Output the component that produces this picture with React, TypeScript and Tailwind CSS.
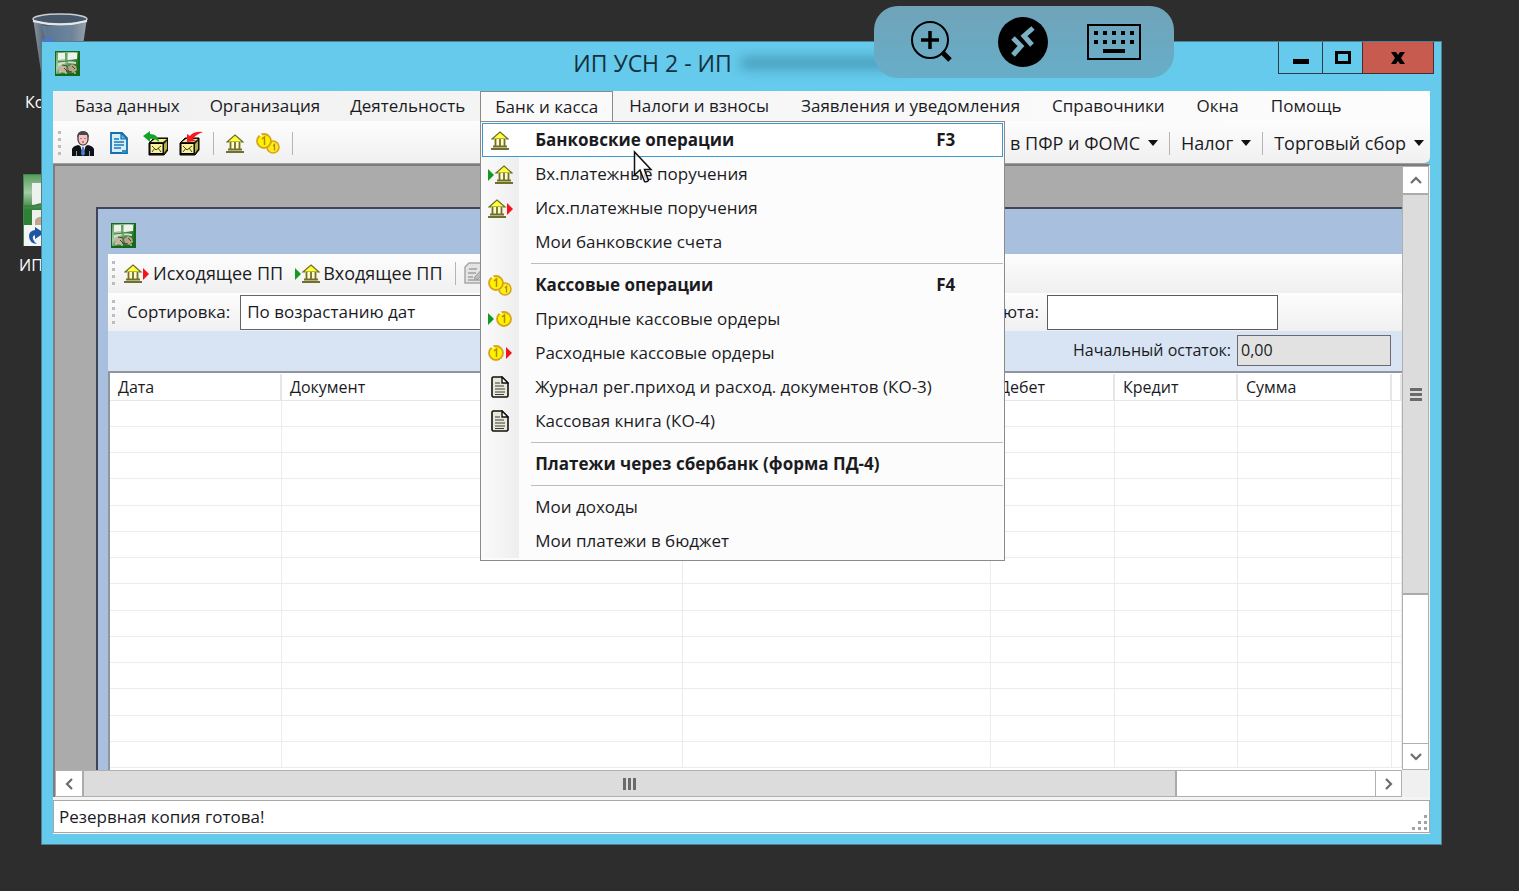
import React from "react";

type IconProps = { className?: string };

const AppIcon: React.FC<IconProps> = ({ className = "size-[25px]" }) => (
  <svg viewBox="0 0 25 25" className={className} aria-hidden="true">
    <defs>
      <linearGradient id="leaf" x1="0" y1="0" x2="1" y2="1">
        <stop offset="0" stopColor="#5c9a5c" />
        <stop offset="0.4" stopColor="#a9cfa6" />
        <stop offset="0.65" stopColor="#2f7d33" />
        <stop offset="1" stopColor="#0c6414" />
      </linearGradient>
    </defs>
    <rect width="25" height="25" fill="#14691b" />
    <rect x="1" y="1" width="22" height="22" fill="url(#leaf)" />
    <path d="M3 2h7v6l-7 1zM13 2h9v6l-9 1z" fill="#eef2eb" />
    <path d="M3 12l6-2 2 2-8 3zM13 10l8 1v2l-8-1z" fill="#cfdfc9" />
    <path d="M4 17l3-3 5 1 1 4-3 3-5-1z" fill="#c6b49c" />
    <path d="M13 16l4-3 4 2 1 4-4 3-4-1z" fill="#b9a285" />
    <path d="M7 14l5 1M13 20l4 1M9 17l3 3M17 15l3 3M12 15v6" stroke="#3d4b35" fill="none" />
    <path d="M11 2v8M3 11l19-2" stroke="#3c7f3f" fill="none" />
    <path d="M4 21h2M10 22h2M19 22h2" stroke="#e8efe4" />
  </svg>
);

const BankShape = () => (
  <>
    <path d="M9 1l8 7H1z" fill="#ffff3c" stroke="#70702a" strokeWidth="1.2" />
    <rect x="3" y="8" width="12" height="7" fill="#fffbd0" />
    <path d="M4.500 8v7M9 8v7M13.500 8v7" stroke="#70702a" strokeWidth="1.800" />
    <path d="M2 15.500h14M0 18h18" stroke="#70702a" strokeWidth="2" />
  </>
);

const BankIcon = () => (
  <svg viewBox="0 0 18 19" className="h-[19px] w-[18px]" aria-hidden="true">
    <BankShape />
  </svg>
);

const BankInIcon = () => (
  <svg viewBox="0 0 25 19" className="h-[19px] w-[25px]" aria-hidden="true">
    <path d="M0 4l6 6-6 6z" fill="#129a1e" />
    <g transform="translate(7 0)">
      <BankShape />
    </g>
  </svg>
);

const BankOutIcon = () => (
  <svg viewBox="0 0 25 19" className="h-[19px] w-[25px]" aria-hidden="true">
    <BankShape />
    <path d="M19 4l6 6-6 6z" fill="#f5121b" />
  </svg>
);

const CoinShape = () => (
  <>
    <circle cx="8" cy="8" r="7" fill="#fff200" stroke="#d6a419" strokeWidth="1.800" />
    <path d="M3 1l3 2" stroke="#fff" strokeWidth="2" />
    <path d="M6 6l2.500-2v8" fill="none" stroke="#b08a10" strokeWidth="1.500" />
  </>
);

const CoinsIcon = () => (
  <svg viewBox="0 0 24 21" className="h-[21px] w-[24px]" aria-hidden="true">
    <circle cx="17" cy="14" r="6" fill="#ffec1a" stroke="#d6a419" strokeWidth="1.600" />
    <path d="M17 13l1.500-1.500v6" fill="none" stroke="#b08a10" strokeWidth="1.300" />
    <CoinShape />
  </svg>
);

const CoinInIcon = () => (
  <svg viewBox="0 0 24 17" className="h-[17px] w-[24px]" aria-hidden="true">
    <path d="M0 2l6 6-6 6z" fill="#129a1e" />
    <g transform="translate(8 0)">
      <CoinShape />
    </g>
  </svg>
);

const CoinOutIcon = () => (
  <svg viewBox="0 0 24 17" className="h-[17px] w-[24px]" aria-hidden="true">
    <CoinShape />
    <path d="M18 2l6 6-6 6z" fill="#f5121b" />
  </svg>
);

const PaperIcon = () => (
  <svg viewBox="0 0 18 22" className="h-[22px] w-[18px]" aria-hidden="true">
    <path d="M1 2l1-1h9l6 6v13l-1 1H2l-1-1z" fill="#e9e9d9" stroke="#111" strokeWidth="1.600" />
    <path d="M11 1v6h6z" fill="#fff" stroke="#111" strokeWidth="1.400" />
    <path d="M4 7h5M4 10h9M4 13h10M4 16h10M4 18.500h9" stroke="#3a3a3a" strokeWidth="1.200" />
  </svg>
);

const PersonIcon = () => (
  <svg viewBox="0 0 22 25" className="h-[25px] w-[22px]" aria-hidden="true">
    <path d="M6 6q0-5 5-5t5 5v3q-1 5-5 5t-5-5z" fill="#f6c3c3" stroke="#3a3030" strokeWidth="1.200" />
    <path d="M5 7q0-7 6-7t6 7l-2-3H7z" fill="#4a4547" />
    <path d="M9 7v1M13 7v1M10 11h2" stroke="#7d3b3b" />
    <path d="M0 25v-7q1-3 6-4l5 2 5-2q5 1 6 4v7z" fill="#0e1116" />
    <path d="M8 14l3 9 3-9-3 2z" fill="#fff" />
    <path d="M10 16h2l1 7-2 2-2-2z" fill="#4d7fd0" />
    <path d="M4.500 20v5M17.500 20v5" stroke="#999" />
  </svg>
);

const BlueDocIcon = () => (
  <svg viewBox="0 0 18 22" className="h-[22px] w-[18px]" aria-hidden="true">
    <path d="M1 1h11l5 5v15H1z" fill="#d5eefb" stroke="#146fae" strokeWidth="1.800" />
    <path d="M11 1v6h6z" fill="#5fb4e2" stroke="#146fae" strokeWidth="1.200" />
    <path d="M4 7h5M4 10h10M4 13h10M4 16h7" stroke="#1878b8" strokeWidth="1.500" />
    <path d="M12 18h4v3h-4z" fill="#2b91cb" />
  </svg>
);

const BoxShape = () => (
  <>
    <path d="M4 12l5-5h14v12l-4 5H4z" fill="#222112" stroke="#000" />
    <path d="M6 11l4-3h12l-4 3z" fill="#f3ee86" />
    <path d="M19 13l3-3v8l-3 4z" fill="#b5ad48" />
    <rect x="5" y="12.500" width="13" height="10" fill="#f6f19a" stroke="#000" />
    <path d="M7 15l4 4 5-4M7 21l3-4M16 21l-3-4" fill="none" stroke="#4a4721" />
  </>
);

const BoxOutIcon = () => (
  <svg viewBox="0 0 25 25" className="size-[25px]" aria-hidden="true">
    <g transform="translate(2 0)">
      <BoxShape />
    </g>
    <path d="M0 5l7-5v3q8 0 9 8-4-4-9-3v3z" fill="#17a32a" />
  </svg>
);

const BoxInIcon = () => (
  <svg viewBox="0 0 25 25" className="size-[25px]" aria-hidden="true">
    <g transform="translate(-3 0)">
      <BoxShape />
    </g>
    <path d="M24 1q-9-1-13 4l-3-2v8l9-1-3-2q2-4 10-7z" fill="#fb1520" />
  </svg>
);

const EditDisabledIcon = () => (
  <svg viewBox="0 0 24 24" className="size-6" aria-hidden="true">
    <path d="M2 6l4-4h14v20H2z" fill="#e4e4e4" stroke="#a8a8a8" strokeWidth="1.500" />
    <path d="M6 8h8M5 12h8M5 16h5M5 19h12" stroke="#a0a0a0" strokeWidth="1.500" />
    <path d="M11 17l10-11 3 3-10 10z" fill="#bcbcbc" stroke="#989898" />
  </svg>
);

const RecycleBin = () => (
  <svg viewBox="0 0 56 64" className="h-16 w-14" aria-hidden="true">
    <defs>
      <linearGradient id="glass" x1="0" y1="0" x2="1" y2="0">
        <stop offset="0" stopColor="#8a96a3" />
        <stop offset="0.25" stopColor="#4c5d6e" />
        <stop offset="0.7" stopColor="#6c8096" />
        <stop offset="1" stopColor="#97a2ad" />
      </linearGradient>
    </defs>
    <path d="M1 6l8 54h38l8-54z" fill="url(#glass)" />
    <path d="M10 14h30l-2 16H14z" fill="#6d88a6" opacity="0.6" />
    <path d="M10 28l6-3 6 2-2 4H11z" fill="#4f74d6" />
    <ellipse cx="28" cy="7" rx="27" ry="5" fill="#46576a" stroke="#c9ced3" strokeWidth="1.500" />
    <path d="M1 9q27 7 54 0" fill="none" stroke="#e4e7ea" strokeWidth="2" />
  </svg>
);

const Shortcut = () => (
  <svg viewBox="0 0 72 72" className="size-[72px]" aria-hidden="true">
    <defs>
      <linearGradient id="tile" x1="0" y1="0" x2="0" y2="1">
        <stop offset="0" stopColor="#5a9d60" />
        <stop offset="0.35" stopColor="#a4cba5" />
        <stop offset="0.7" stopColor="#2f8137" />
      </linearGradient>
    </defs>
    <rect width="72" height="72" fill="#3d8845" />
    <rect x="1" y="1" width="17" height="50" fill="url(#tile)" />
    <path d="M9 9h24v22H9zM9 36h24v18H9z" fill="#eef2ec" />
    <path d="M0 32q9 1 18-2" stroke="#3b8540" strokeWidth="2" fill="none" />
    <path d="M12 46q3-4 8-3v10h-8z" fill="#c4a48d" />
    <rect x="1" y="51" width="21" height="21" fill="#f2f4f6" />
    <path d="M14 70q-8-1-8-8 0-5 6-6v-3l9 6-9 6v-4q-3 1-2 4 1 3 4 5z" fill="#1c56a4" />
  </svg>
);

const Cursor = () => (
  <svg viewBox="0 0 20 34" className="h-[34px] w-5" aria-hidden="true">
    <path
      d="M1.500 2v23l5.500-5 4.500 11.500q2 1 4-1L11.500 19.500H18z"
      fill="#fff"
      fillOpacity="0.75"
      stroke="#111"
      strokeWidth="1.500"
    />
  </svg>
);

const Caret = () => (
  <svg viewBox="0 0 10 6" className="h-1.5 w-2.5" aria-hidden="true">
    <path d="M0 0h10L5 6z" fill="#111" />
  </svg>
);

const Chevron: React.FC<{ d: string }> = ({ d }) => (
  <svg viewBox="0 0 12 12" className="size-3" aria-hidden="true">
    <path d={d} fill="none" stroke="#6b6b6b" strokeWidth="2.200" />
  </svg>
);

const Grip = () => (
  <div className="flex flex-col gap-1 px-1" aria-hidden="true">
    <i className="size-[3px] bg-[#bdbdbd]" />
    <i className="size-[3px] bg-[#bdbdbd]" />
    <i className="size-[3px] bg-[#bdbdbd]" />
    <i className="size-[3px] bg-[#bdbdbd]" />
  </div>
);

const Divider = () => <div className="h-[23px] w-px shrink-0 bg-[#b5b5b5]" />;

const menuBefore = ["База данных", "Организация", "Деятельность"];
const menuAfter = [
  "Налоги и взносы",
  "Заявления и уведомления",
  "Справочники",
  "Окна",
  "Помощь",
];

type Entry = { label: string; icon?: React.ReactNode; hotkey?: string; bold?: boolean };

const bankMenu: Entry[][] = [
  [
    { label: "Банковские операции", icon: <BankIcon />, hotkey: "F3", bold: true },
    { label: "Вх.платежные поручения", icon: <BankInIcon /> },
    { label: "Исх.платежные поручения", icon: <BankOutIcon /> },
    { label: "Мои банковские счета" },
  ],
  [
    { label: "Кассовые операции", icon: <CoinsIcon />, hotkey: "F4", bold: true },
    { label: "Приходные кассовые ордеры", icon: <CoinInIcon /> },
    { label: "Расходные кассовые ордеры", icon: <CoinOutIcon /> },
    { label: "Журнал рег.приход и расход. документов (КО-3)", icon: <PaperIcon /> },
    { label: "Кассовая книга (КО-4)", icon: <PaperIcon /> },
  ],
  [{ label: "Платежи через сбербанк (форма ПД-4)", bold: true }],
  [{ label: "Мои доходы" }, { label: "Мои платежи в бюджет" }],
];

const toolbarButtons = [
  { name: "Предприниматель", icon: <PersonIcon /> },
  { name: "Документ", icon: <BlueDocIcon /> },
  { name: "Сохранить копию", icon: <BoxOutIcon /> },
  { name: "Восстановить копию", icon: <BoxInIcon /> },
];

const columns = [
  { name: "Дата", width: "w-[171px]" },
  { name: "Документ", width: "w-[401px]" },
  { name: "", width: "w-[308px]" },
  { name: "Дебет", width: "w-[124px]" },
  { name: "Кредит", width: "w-[123px]" },
  { name: "Сумма", width: "w-[154px]" },
  { name: "", width: "w-auto" },
];

const rows = Array.from({ length: 14 }, (_, i) => i);

const BankMenu = () => (
  <div
    role="menu"
    className="absolute top-full left-[-1px] z-20 w-[525px] border border-[#8a8a8a] bg-[#fcfcfc] p-px pb-0.5"
  >
    <div className="bg-linear-to-r from-[#fafafa] from-0% to-[#eeeeee] to-100% bg-[length:37px_100%] bg-no-repeat">
      {bankMenu.map((group, g) => (
        <div
          key={g}
          className={g > 0 ? "before:my-1 before:ml-[49px] before:block before:h-px before:bg-[#bdbdbd]" : ""}
        >
          {group.map((entry, i) => (
            <button
              key={entry.label}
              role="menuitem"
              className={`flex h-[34px] w-full items-center border pr-[47px] text-left text-[17px] ${
                g === 0 && i === 0 ? "border-[#3f97d0] bg-white" : "border-transparent"
              } ${entry.bold ? "font-bold" : ""}`}
            >
              <span className="flex w-[34px] justify-center">{entry.icon}</span>
              <span className="ml-[18px] whitespace-nowrap">{entry.label}</span>
              {entry.hotkey && <span className="ml-auto">{entry.hotkey}</span>}
            </button>
          ))}
        </div>
      ))}
    </div>
    <div className="pointer-events-none absolute top-7 left-[152px]">
      <Cursor />
    </div>
  </div>
);

const MenuBar = () => (
  <nav className="flex h-[30px] shrink-0 bg-linear-to-r from-[#f0f0f0] to-[#fdfdfd] pl-[7px] text-[17px] text-[#1b1b1f]">
    {menuBefore.map((name) => (
      <button key={name} className="px-[15px] whitespace-nowrap">
        {name}
      </button>
    ))}
    <div className="relative flex border border-b-0 border-[#8a8a8a] bg-[#fafafa]">
      <button aria-expanded="true" className="px-[14px] whitespace-nowrap">
        Банк и касса
      </button>
      <BankMenu />
    </div>
    {menuAfter.map((name) => (
      <button key={name} className="px-4 whitespace-nowrap">
        {name}
      </button>
    ))}
  </nav>
);

const DropButton: React.FC<{ name: string }> = ({ name }) => (
  <button className="flex items-center gap-2 whitespace-nowrap">
    {name}
    <Caret />
  </button>
);

const Toolbar = () => (
  <div className="flex h-[43px] shrink-0 items-center rounded-br-md border-b border-[#a0a0a0] bg-linear-to-b from-[#fdfdfd] to-[#f0f0f0] pt-0.5 pr-[6px] pl-px text-[18px] text-[#1b1b1f]">
    <Grip />
    {toolbarButtons.map((b) => (
      <button key={b.name} aria-label={b.name} className="flex h-8 w-9 shrink-0 items-center justify-center">
        {b.icon}
      </button>
    ))}
    <div className="ml-1 flex items-center gap-3">
      <Divider />
      <button aria-label="Банк">
        <BankIcon />
      </button>
      <button aria-label="Касса">
        <CoinsIcon />
      </button>
      <Divider />
    </div>
    <div className="ml-auto flex items-center gap-[11px]">
      <DropButton name="ы в ПФР и ФОМС" />
      <Divider />
      <DropButton name="Налог" />
      <Divider />
      <DropButton name="Торговый сбор" />
    </div>
  </div>
);

const JournalTable = () => (
  <div className="min-h-0 flex-1 overflow-hidden border-t-2 border-l-2 border-[#8f959e] bg-white pt-px">
    <table className="w-full table-fixed border-collapse text-left text-[16px] text-[#1b1b1f]">
      <thead>
        <tr className="h-[26px]">
          {columns.map((c, i) => (
            <th
              key={i}
              className={`border-r-2 border-b border-[#e6e6e6] p-0 pl-2 leading-5 font-normal ${c.width}`}
            >
              {c.name}
            </th>
          ))}
        </tr>
      </thead>
      <tbody>
        {rows.map((r) => (
          <tr key={r} className="h-[26px] nth-[4n]:h-[27px]">
            {columns.map((_, i) => (
              <td key={i} className="border-r border-b border-[#ececec] p-0" />
            ))}
          </tr>
        ))}
      </tbody>
    </table>
  </div>
);

const ChildWindow = () => (
  <section className="mt-[41px] ml-[41px] flex min-h-0 min-w-0 flex-1 flex-col overflow-hidden border-t-2 border-l-2 border-[#3d4556] bg-[#a8c0de] pl-[10px] text-[17px] text-[#1b1b1f]">
    <header className="flex h-[45px] shrink-0 items-center pt-2 pl-[3px]">
      <AppIcon />
    </header>
    <div className="flex h-[39px] shrink-0 items-center bg-linear-to-b from-[#fdfdfd] to-[#f0f0f0] pb-px text-[18px]">
      <Grip />
      <button className="ml-[5px] flex items-center gap-1 whitespace-nowrap">
        <BankOutIcon />
        Исходящее ПП
      </button>
      <button className="ml-3 flex items-center gap-[3px] whitespace-nowrap">
        <BankInIcon />
        Входящее ПП
      </button>
      <div className="ml-3 flex items-center gap-[7px]">
        <Divider />
        <button aria-label="Изменить" disabled>
          <EditDisabledIcon />
        </button>
      </div>
    </div>
    <div className="flex h-[38px] shrink-0 items-center bg-linear-to-b from-[#fdfdfd] to-[#f0f0f0]">
      <Grip />
      <label htmlFor="sort" className="ml-2">
        Сортировка:
      </label>
      <select
        id="sort"
        className="ml-[10px] h-[35px] w-[320px] appearance-none border border-[#666666] bg-white px-1.5"
      >
        <option>По возрастанию дат</option>
      </select>
      <label htmlFor="currency" className="ml-auto">
        Валюта:
      </label>
      <input id="currency" className="mr-[124px] ml-2 h-[35px] w-[231px] border border-[#5c5c5c] bg-white px-1" />
    </div>
    <div className="flex h-10 shrink-0 items-center justify-end gap-[6px] bg-[#d8e4f3] pr-[11px] pb-0.5 text-[16px]">
      <label htmlFor="balance">Начальный остаток:</label>
      <input
        id="balance"
        readOnly
        defaultValue="0,00"
        className="h-[31px] w-[154px] border border-[#6b6b6b] bg-[#e2e2e2] px-[3px]"
      />
    </div>
    <JournalTable />
  </section>
);

const VerticalScroll = () => (
  <div className="flex w-[27px] shrink-0 flex-col border border-[#b0b0b0] bg-white">
    <button aria-label="Вверх" className="flex h-[26px] shrink-0 items-center justify-center">
      <Chevron d="M1 9l5-5 5 5" />
    </button>
    <div className="flex flex-[27] flex-col items-center justify-center gap-0.5 border-y-2 border-[#ababab] bg-[#dcdcdc]">
      <i className="h-[3px] w-3 bg-[#6b6b6b]" />
      <i className="h-[3px] w-3 bg-[#6b6b6b]" />
      <i className="h-[3px] w-3 bg-[#6b6b6b]" />
    </div>
    <div className="flex-[10]" />
    <button
      aria-label="Вниз"
      className="flex h-[26px] shrink-0 items-center justify-center border-t border-[#b0b0b0]"
    >
      <Chevron d="M1 3l5 5 5-5" />
    </button>
  </div>
);

const HorizontalScroll = () => (
  <div className="flex h-[27px] shrink-0 bg-[#f0f0f0] pr-[27px]">
    <div className="flex flex-1 border border-[#b0b0b0] bg-white">
      <button aria-label="Влево" className="flex w-[26px] shrink-0 items-center justify-center">
        <Chevron d="M9 1L4 6l5 5" />
      </button>
      <div className="flex flex-[11] items-center justify-center gap-0.5 border-x-2 border-[#ababab] bg-[#dcdcdc]">
        <i className="h-3 w-[3px] bg-[#6b6b6b]" />
        <i className="h-3 w-[3px] bg-[#6b6b6b]" />
        <i className="h-3 w-[3px] bg-[#6b6b6b]" />
      </div>
      <div className="flex-[2]" />
      <button
        aria-label="Вправо"
        className="flex w-[26px] shrink-0 items-center justify-center border-l border-[#b0b0b0]"
      >
        <Chevron d="M3 1l5 5-5 5" />
      </button>
    </div>
  </div>
);

const StatusBar = () => (
  <footer className="border-t-[3px] border-b border-[#f4f4f4]">
    <div className="flex h-[33px] items-center justify-between border border-[#a8a8a8] bg-white pt-px pl-[5px] text-[17px] text-[#1b1b1f]">
      <span>Резервная копия готова!</span>
      <svg viewBox="0 0 18 18" className="size-[18px] self-end" aria-hidden="true">
        <path
          d="M13 1h3v3h-3zM13 7h3v3h-3zM13 13h3v3h-3zM7 7h3v3H7zM7 13h3v3H7zM1 13h3v3H1z"
          fill="#a3a3a3"
        />
      </svg>
    </div>
  </footer>
);

const TitleBar = () => (
  <header className="flex h-[49px] shrink-0 items-start">
    <div className="flex flex-1 pt-[9px] pl-[2px]">
      <AppIcon />
    </div>
    <h1 className="flex items-center gap-2 pt-[7px] text-[23px] leading-7 whitespace-nowrap text-[#14303c]">
      ИП УСН 2 - ИП
      <span className="h-3 w-[172px] rounded-full bg-[#3b87a5] opacity-70 blur-[6px]" />
    </h1>
    <div className="flex h-8 flex-1 justify-end">
      <button
        aria-label="Свернуть"
        className="flex w-[45px] items-center justify-center border border-t-0 border-[#2a3d47] pt-2"
      >
        <i className="h-[5px] w-4 bg-black" />
      </button>
      <button
        aria-label="Развернуть"
        className="flex w-[39px] items-center justify-center border-b border-[#2a3d47]"
      >
        <i className="h-[13px] w-4 border-[3px] border-black" />
      </button>
      <button
        aria-label="Закрыть"
        className="-mr-1 flex w-[72px] items-center justify-center border border-t-0 border-[#4d2a2e] bg-[#c75b50]"
      >
        <svg viewBox="0 0 14 12" className="h-3 w-[14px]" aria-hidden="true">
          <path d="M0 0h5l2 3 2-3h5l-4 6 4 6H9L7 9l-2 3H0l4-6z" fill="#000" />
        </svg>
      </button>
    </div>
  </header>
);

const RemoteBar = () => (
  <div className="absolute top-1.5 right-[345px] z-30 flex h-[72px] w-[300px] items-center justify-between rounded-[24px] bg-linear-to-b from-[#6fa3b9] to-[#67aec8] pr-[33px] pl-9">
    <button aria-label="Увеличить">
      <svg viewBox="0 0 48 48" className="size-12" fill="none" stroke="#000" aria-hidden="true">
        <circle cx="20" cy="22" r="18" strokeWidth="2" />
        <path d="M20 13v18M11 22h18" strokeWidth="3.500" />
        <path d="M32 34l8 8" strokeWidth="5" />
      </svg>
    </button>
    <button aria-label="Подключение">
      <svg viewBox="0 0 50 50" className="size-[50px]" aria-hidden="true">
        <circle cx="25" cy="25" r="25" fill="#000" />
        <path
          d="M15 21l8 8-8 9M35 11l-9 8 8 9"
          fill="none"
          stroke="#7bb0c5"
          strokeWidth="5"
          strokeLinejoin="miter"
        />
      </svg>
    </button>
    <button aria-label="Клавиатура">
      <svg viewBox="0 0 54 36" className="h-9 w-[54px]" aria-hidden="true">
        <rect x="1" y="1" width="52" height="34" fill="none" stroke="#000" strokeWidth="2" />
        <path
          d="M7 7h4v4H7zM16 7h4v4h-4zM25 7h4v4h-4zM34 7h4v4h-4zM43 7h4v4h-4zM7 16h4v4H7zM16 16h4v4h-4zM25 16h4v4h-4zM34 16h4v4h-4zM43 16h4v4h-4zM16 25h22v4H16z"
          fill="#000"
        />
      </svg>
    </button>
  </div>
);

const App: React.FC = () => {
  return (
    <div className="relative flex h-screen overflow-hidden bg-[#2d2d2e] pt-[41px] pr-[77px] pb-[46px] pl-[41px] font-['Open_Sans','Noto_Sans',sans-serif]">
      {/* Desktop icons, mostly under the window */}
      <div className="absolute top-3 left-8">
        <RecycleBin />
      </div>
      <span className="absolute top-[90px] left-[25px] text-[16px] text-white">Ко</span>
      <div className="absolute top-[174px] left-[23px]">
        <Shortcut />
      </div>
      <span className="absolute top-[253px] left-[19px] text-[16px] text-white">ИП</span>

      <main className="relative z-10 flex min-w-0 flex-1 flex-col border border-[#4f7f90] bg-[#65caeb] px-[11px] pb-[10px]">
        <TitleBar />
        <MenuBar />
        <Toolbar />
        <div className="flex min-h-0 flex-1 flex-col border-t-2 border-r border-l-2 border-t-[#7d7d7d] border-r-[#f4f4f4] border-l-[#7d7d7d] bg-[#ababab]">
          <div className="flex min-h-0 flex-1">
            <ChildWindow />
            <VerticalScroll />
          </div>
          <HorizontalScroll />
        </div>
        <StatusBar />
      </main>

      <RemoteBar />
    </div>
  );
};

export default App;
